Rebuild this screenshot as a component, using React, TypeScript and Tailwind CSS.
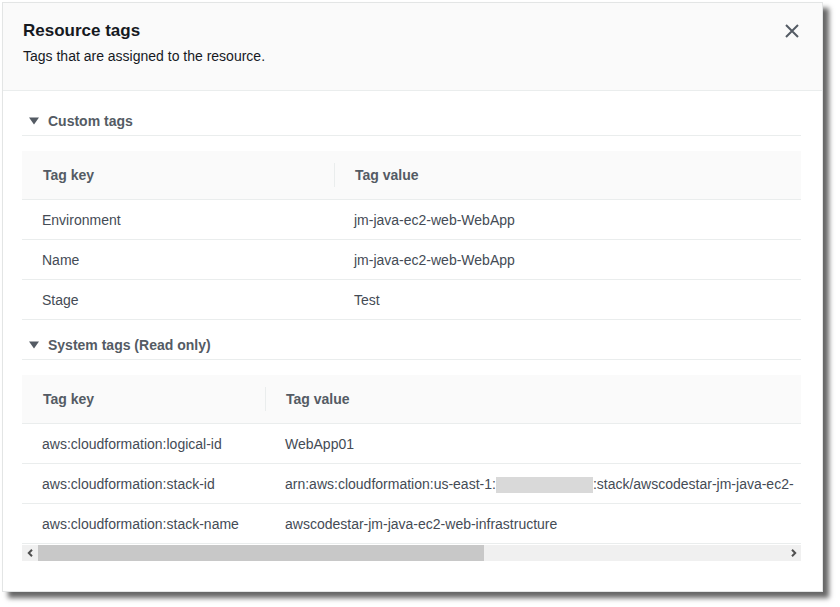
import React from 'react';

type Tag = { key: string; value: React.ReactNode };

const customTags: Tag[] = [
  { key: 'Environment', value: 'jm-java-ec2-web-WebApp' },
  { key: 'Name', value: 'jm-java-ec2-web-WebApp' },
  { key: 'Stage', value: 'Test' },
];

const systemTags: Tag[] = [
  { key: 'aws:cloudformation:logical-id', value: 'WebApp01' },
  {
    key: 'aws:cloudformation:stack-id',
    value: (
      <>
        arn:aws:cloudformation:us-east-1:
        <span className="inline-block w-[97px] h-[16px] align-middle bg-[#d9d9d9]" />
        :stack/awscodestar-jm-java-ec2-
      </>
    ),
  },
  { key: 'aws:cloudformation:stack-name', value: 'awscodestar-jm-java-ec2-web-infrastructure' },
];

function SectionHeading({ title, top }: { title: string; top: string }) {
  return (
    <div className={`flex items-center ${top} pb-[4px] border-b border-[#eaeded]`}>
      <svg width="10" height="8" viewBox="0 0 10 8" className="ml-[7px] mr-[9px]">
        <path d="M0 0.5 L10 0.5 L5 7.5 Z" fill="#545b64" />
      </svg>
      <span className="text-[14px] leading-[20px] font-bold text-[#545b64]">{title}</span>
    </div>
  );
}

function TagTable({ tags, keyWidth, scroll }: { tags: Tag[]; keyWidth: string; scroll?: boolean }) {
  return (
    <div className="mt-[15px] overflow-hidden">
      <div className={scroll ? 'w-[1300px]' : 'w-full'}>
        {/* Header */}
        <div className="flex items-center h-[49px] bg-[#fafafa] border-b border-[#eaeded]">
          <div className={`${keyWidth} shrink-0 pl-[21px] text-[14px] font-bold text-[#545b64]`}>Tag key</div>
          <div className="w-px h-[24px] bg-[#eaeded]" />
          <div className="pl-[20px] text-[14px] font-bold text-[#545b64]">Tag value</div>
        </div>
        {/* Rows */}
        {tags.map((t) => (
          <div key={t.key} className="flex items-center h-[40px] pt-[2px] border-b border-[#eaeded] text-[14px] text-[#444b55]">
            <div className={`${keyWidth} shrink-0 pl-[20px]`}>{t.key}</div>
            <div className="pl-[20px] whitespace-nowrap">{t.value}</div>
          </div>
        ))}
      </div>
    </div>
  );
}

function ScrollBar() {
  return (
    <div className="mt-px flex h-[16px] bg-[#f0f0f0]">
      <div className="w-[16px] flex items-center justify-center">
        <svg width="7" height="8" viewBox="0 0 7 8">
          <path d="M5 0.8 L1.8 4 L5 7.2" stroke="#505050" strokeWidth="2" fill="none" />
        </svg>
      </div>
      <div className="flex-1 flex">
        <div className="w-[446px] h-full bg-[#c8c8c8]" />
      </div>
      <div className="w-[16px] flex items-center justify-center">
        <svg width="7" height="8" viewBox="0 0 7 8">
          <path d="M2 0.8 L5.2 4 L2 7.2" stroke="#505050" strokeWidth="2" fill="none" />
        </svg>
      </div>
    </div>
  );
}

export default function App() {
  return (
    <div className="w-[840px] h-[607px] bg-white p-[2px] font-['Liberation_Sans',Arial,sans-serif]">
      <div className="w-[821px] h-[590px] bg-white border border-[#e3e5e5] shadow-[6px_6px_5px_rgba(0,0,0,0.6)] flex flex-col">
        {/* Header */}
        <div className="flex items-start justify-between bg-[#fafafa] border-b border-[#eaeded] pl-[20px] pr-[23px] pt-[17px] pb-[24px]">
          <div>
            <h2 className="text-[17px] leading-[22px] font-bold text-[#16191f]">Resource tags</h2>
            <p className="mt-[4px] text-[14px] leading-[20px] text-[#16191f]">Tags that are assigned to the resource.</p>
          </div>
          <svg width="14" height="14" viewBox="0 0 14 14" className="mt-[4px]">
            <path d="M1 1 L13 13 M13 1 L1 13" stroke="#545b64" strokeWidth="2" />
          </svg>
        </div>

        {/* Body */}
        <div className="pl-[19px] pr-[21px]">
          <SectionHeading title="Custom tags" top="pt-[20px]" />
          <TagTable tags={customTags} keyWidth="w-[312px]" />

          <SectionHeading title="System tags (Read only)" top="pt-[15px]" />
          <TagTable tags={systemTags} keyWidth="w-[243px]" scroll />
          <ScrollBar />
        </div>
      </div>
    </div>
  );
}
